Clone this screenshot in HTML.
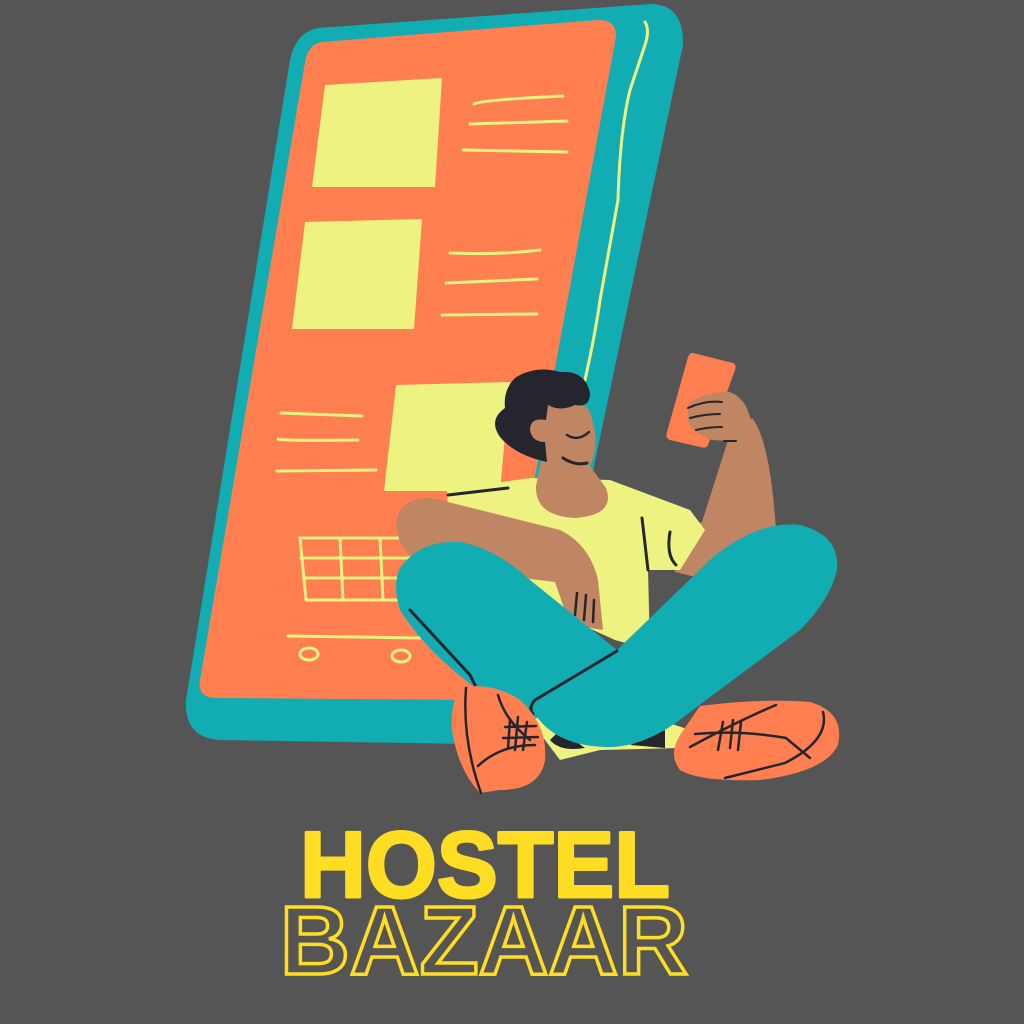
<!DOCTYPE html>
<html><head><meta charset="utf-8"><style>
html,body{margin:0;padding:0;background:#555555;width:1024px;height:1024px;overflow:hidden}
svg{display:block}
</style></head><body>
<svg width="1024" height="1024" viewBox="0 0 1024 1024" xmlns="http://www.w3.org/2000/svg">
<rect width="1024" height="1024" fill="#555555"/>
<!-- phone -->
<path d="M318,28 L650,4 Q684,4 683,45 L535,745 L220,740 Q184,738 186,700 L290,60 Q296,32 318,28Z" fill="#12ADB3"/>
<path d="M322,42 L598,20 Q620,20 615,42 L494,700 L215,698 Q197,697 200,680 L305,62 Q308,44 322,42Z" fill="#FF7F50"/>
<path d="M645,22 Q650,30 645,45 L630,90 Q620,130 618,200 L600,300 Q596,330 585,380" fill="none" stroke="#EDF280" stroke-width="3" stroke-linecap="round"/>
<g fill="#EDF280">
<polygon points="325,85 442,78 435,187 312,187"/>
<polygon points="305,222 422,219 414,329 292,329"/>
<polygon points="396,385 510,382 500,491 384,491"/>
</g>
<g fill="none" stroke="#EDF280" stroke-width="3" stroke-linecap="round">
<path d="M474,104 Q480,100 563,96"/><path d="M470,124 L567,121"/><path d="M463,150 L567,152"/>
<path d="M450,253 Q500,255 540,250"/><path d="M446,283 L537,279"/><path d="M442,315 L537,314"/>
<path d="M281,413 L362,416"/><path d="M278,439 Q282,441 358,440"/><path d="M277,471 L376,470"/>
<path d="M300,538 L410,538 M301,558 L410,558 M304,578 L410,578 M306,600 L410,600 M300,538 L306,600 M340,538 L343,600 M380,538 L383,600"/>
<path d="M288,636 L420,638"/>
<ellipse cx="309" cy="654" rx="9" ry="6"/><ellipse cx="401" cy="656" rx="9" ry="6"/>
</g>
<!-- shorts -->
<path d="M530,720 L560,760 L600,750 L680,748 L690,730 L600,700Z" fill="#EDF280"/>
<path d="M550,740 Q560,752 585,748 L560,730Z M630,745 L665,748 L665,730Z" fill="#25252D"/>
<!-- right arm -->
<path d="M668,532 L702,522 L728,440 L752,418 Q770,440 776,530 L700,578 L675,572Z" fill="#C08563"/>
<!-- phone in hand -->
<path d="M693,353 L733,363 Q737,365 735,370 L708,445 Q706,449 700,447 L670,440 Q665,438 667,432 L688,357 Q690,352 693,353Z" fill="#FF7F50"/>
<path d="M688,405 Q700,392 730,392 Q750,400 752,430 L745,442 L712,440 Q690,432 688,420Z" fill="#C08563"/>
<g fill="none" stroke="#25252D" stroke-width="2" stroke-linecap="round">
<path d="M688,408 Q705,400 722,402"/><path d="M690,418 Q705,414 720,414"/><path d="M696,430 Q708,427 722,427"/><path d="M724,441 L736,441"/>
</g>
<!-- shirt -->
<path d="M447,490 L530,478 L610,480 L690,510 L705,530 L680,570 L648,570 L650,650 L615,640 L560,615 L450,555Z" fill="#EDF280"/>
<path d="M642,518 L648,570 M670,532 Q666,555 676,565" fill="none" stroke="#25252D" stroke-width="3" stroke-linecap="round"/>
<path d="M448,495 L508,488" stroke="#25252D" stroke-width="3" stroke-linecap="round"/>
<!-- face + neck -->
<path d="M530,405 Q560,395 588,408 Q602,440 590,466 L606,488 Q616,515 575,518 Q535,516 536,486 L541,462 L530,440Z" fill="#C08563"/>
<path d="M515,378 Q535,365 560,372 Q585,370 590,393 Q590,408 575,405 Q560,412 548,405 L546,420 Q530,417 530,430 Q532,442 545,442 L547,462 Q515,455 500,437 Q488,420 505,408 Q503,390 515,378Z" fill="#25252D"/>
<path d="M567,435 Q578,442 589,432" fill="none" stroke="#25252D" stroke-width="2.5" stroke-linecap="round"/>
<path d="M563,458 Q575,466 587,463" fill="none" stroke="#25252D" stroke-width="3" stroke-linecap="round"/>
<!-- left arm -->
<path d="M396,525 Q398,497 432,498 L560,530 Q590,545 598,580 L603,630 L570,625 L555,582 L440,568 Q400,562 396,525Z" fill="#C08563"/>
<path d="M577,593 L575,615 M586,595 L584,620 M594,600 L593,622" stroke="#25252D" stroke-width="2.5" stroke-linecap="round"/>
<!-- left leg -->
<path d="M400,568 Q420,540 460,542 Q495,548 530,580 L617,650 L547,702 L473,686 Q425,650 400,610 Q392,585 400,568Z" fill="#12ADB3"/>
<path d="M410,610 L470,675 L475,685" fill="none" stroke="#25252D" stroke-width="3" stroke-linecap="round"/>
<!-- right leg -->
<path d="M713,557 Q760,520 800,525 Q840,535 837,570 Q830,600 800,630 L690,712 Q650,745 613,747 Q560,748 537,717 Q530,700 545,690 L617,650Z" fill="#12ADB3"/>
<path d="M617,651 L535,700 Q528,708 533,714" fill="none" stroke="#25252D" stroke-width="3" stroke-linecap="round"/>
<!-- shoes -->
<path d="M465,687 Q495,683 520,700 Q548,725 545,760 Q540,790 500,790 L480,793 Q458,770 452,730 Q450,695 465,687Z" fill="#FF7F50"/>
<path d="M466,688 Q462,740 481,793 M498,695 Q505,720 530,740 M478,766 Q500,745 535,745 M510,720 L508,748 M518,717 L515,750 M527,722 L523,750 M505,727 L536,726 M503,738 L538,737" fill="none" stroke="#25252D" stroke-width="2.5" stroke-linecap="round"/>
<path d="M700,706 Q760,698 810,702 Q845,712 838,745 Q825,772 760,780 Q700,782 680,770 Q668,755 680,735Z" fill="#FF7F50"/>
<path d="M690,747 Q740,720 776,705 M695,734 Q740,730 786,738 L810,758 M723,722 L718,750 M733,720 L730,748 M741,722 L738,750 M823,712 Q830,740 785,763 L725,778" fill="none" stroke="#25252D" stroke-width="2.5" stroke-linecap="round"/>
<!-- text -->
<text x="485" y="897" text-anchor="middle" font-family="Liberation Sans, sans-serif" font-weight="bold" font-size="94" fill="#FFDD22" stroke="#FFDD22" stroke-width="3" stroke-linejoin="round" textLength="370" lengthAdjust="spacingAndGlyphs">HOSTEL</text>
<text x="484" y="974" text-anchor="middle" font-family="Liberation Sans, sans-serif" font-weight="bold" font-size="97" fill="none" stroke="#FFDD22" stroke-width="3.5" textLength="408" lengthAdjust="spacingAndGlyphs">BAZAAR</text>
</svg>
</body></html>
